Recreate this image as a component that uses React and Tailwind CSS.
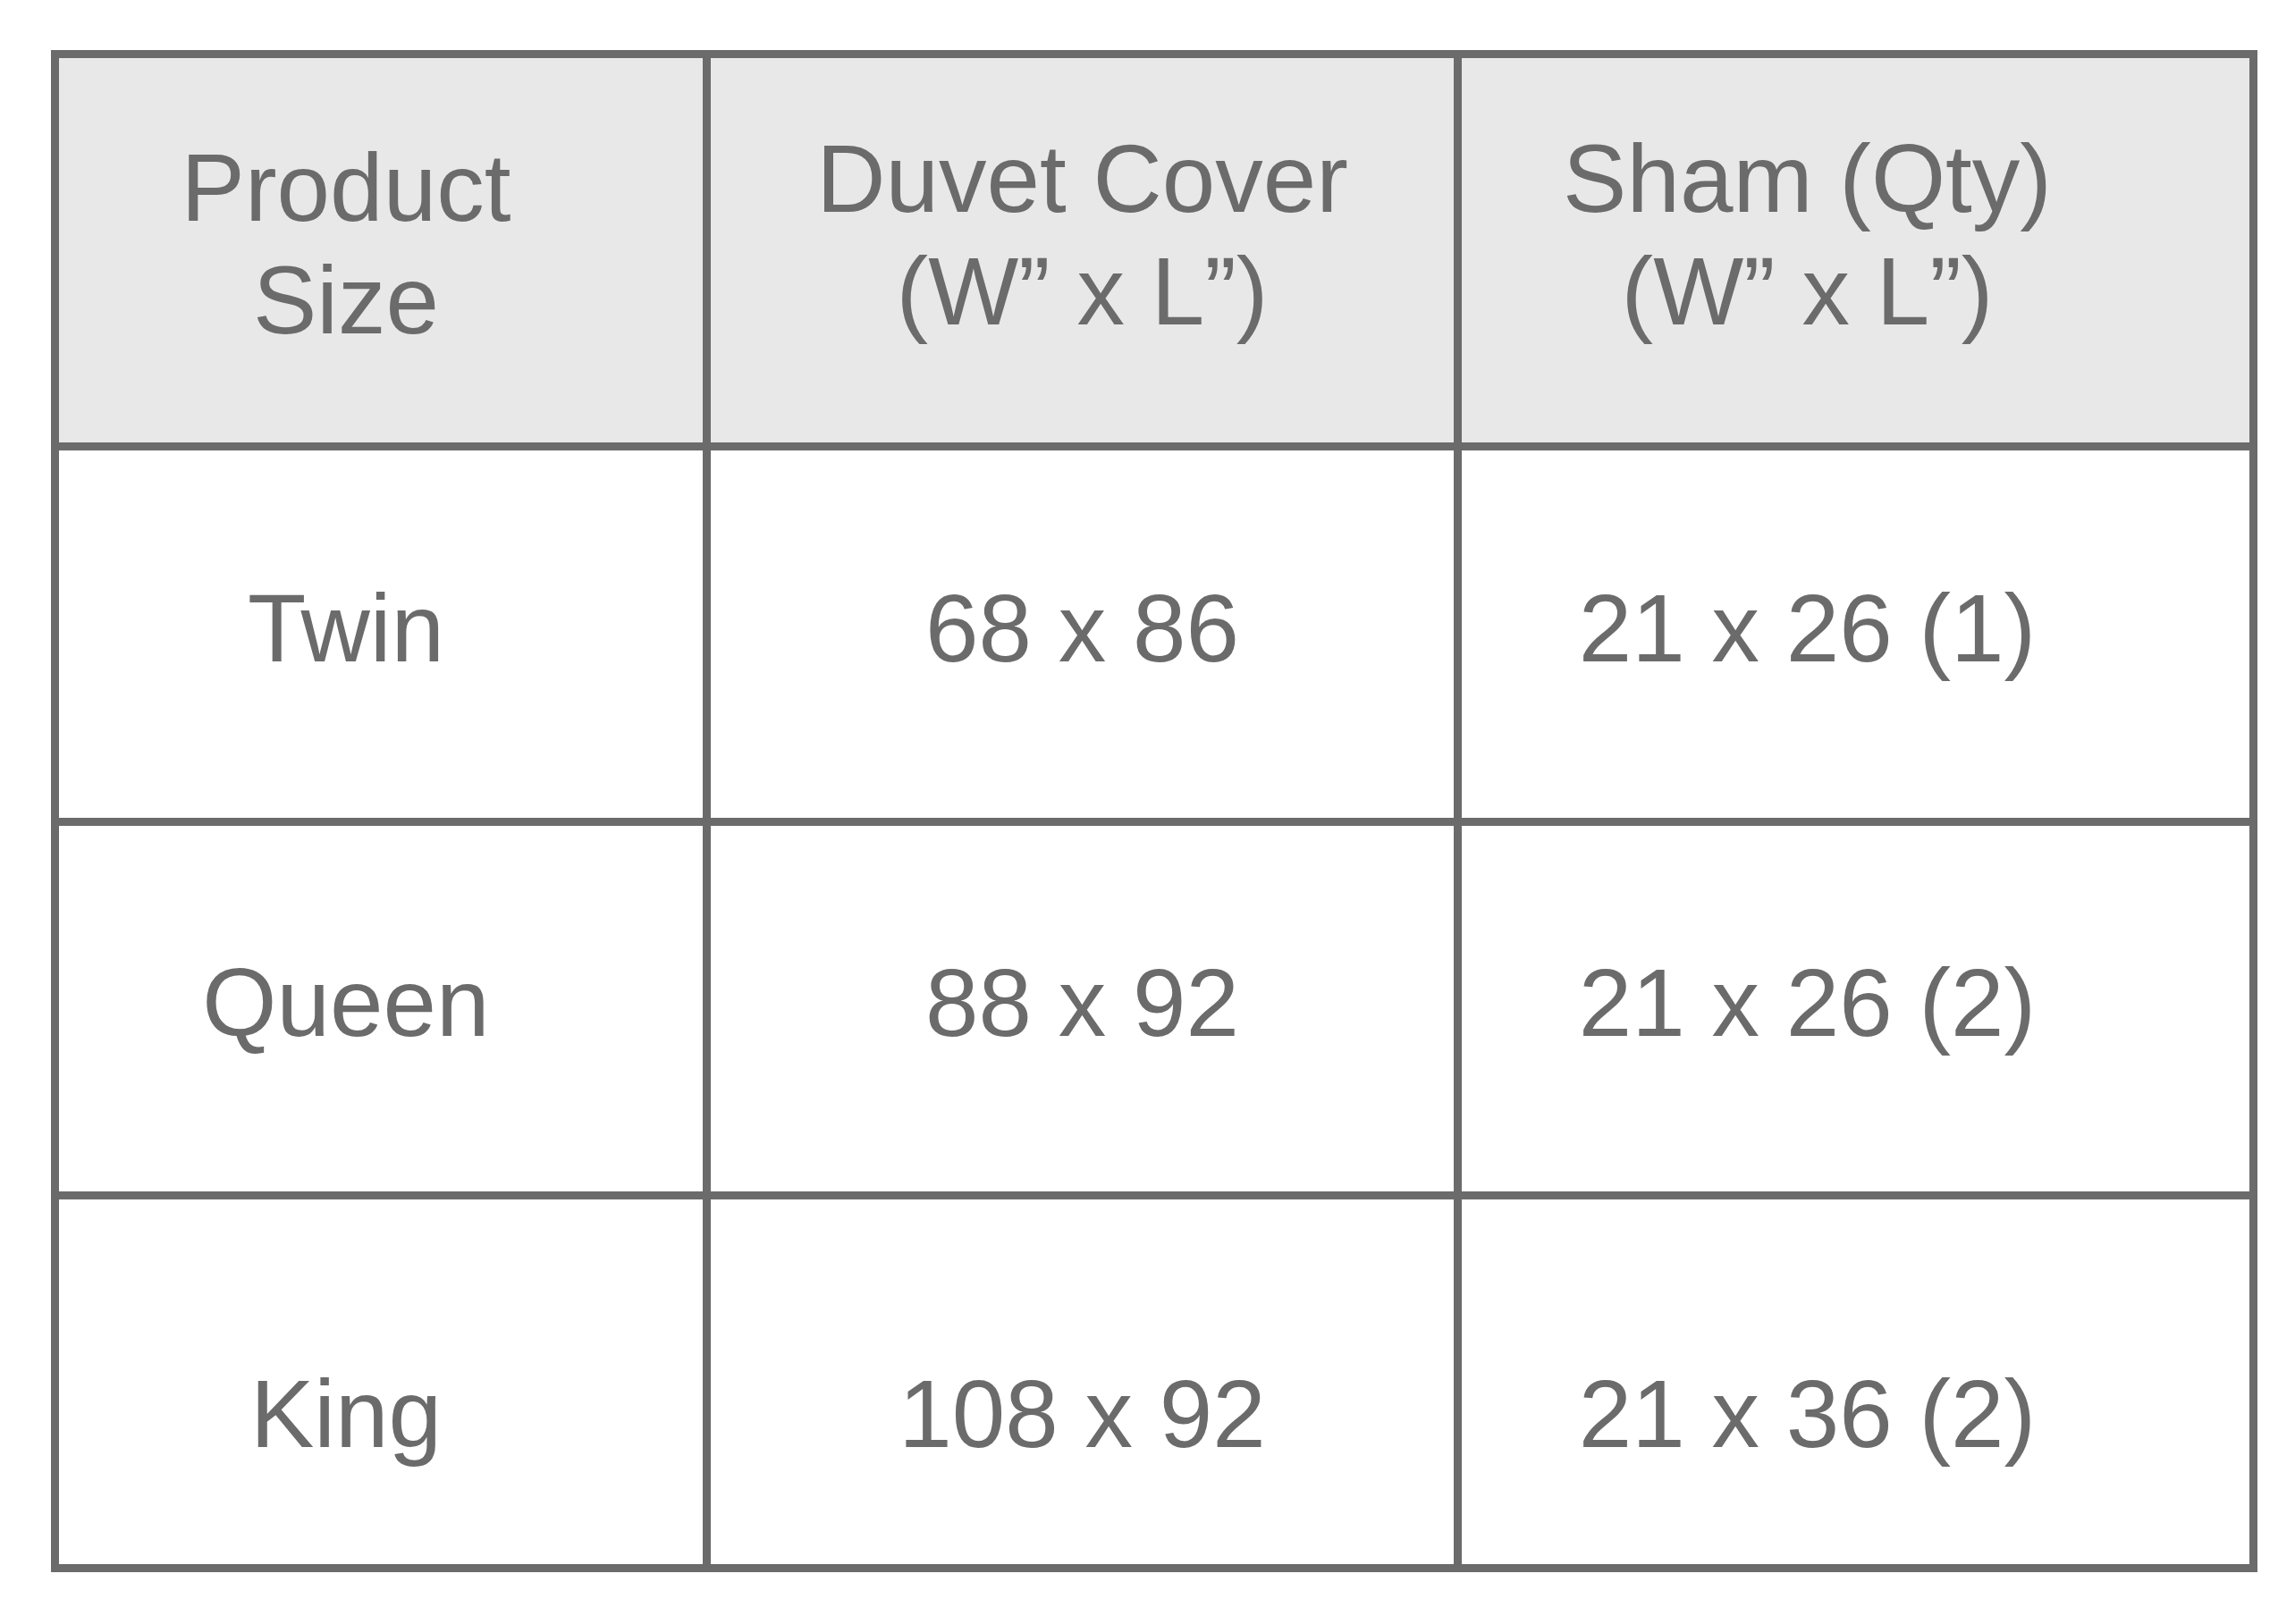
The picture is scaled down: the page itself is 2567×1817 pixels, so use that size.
const headers = [
  { lines: ['Product', 'Size'], pad: 'pr-[78px] pb-[14px]' },
  { lines: ['Duvet Cover', '(W” x L”)'], pad: 'pb-[34px]' },
  { lines: ['Sham (Qty)', '(W” x L”)'], pad: 'pr-[108px] pb-[34px]' },
];

const rows = [
  { cells: ['Twin', '68 x 86', '21 x 26 (1)'], pad: 'pb-[12px]' },
  { cells: ['Queen', '88 x 92', '21 x 26 (2)'], pad: 'pb-[12px]' },
  { cells: ['King', '108 x 92', '21 x 36 (2)'], pad: 'pt-[72px]' },
];

// horizontal offsets per column (col 1 and 3 text sits left of center)
const colPad = ['pr-[78px]', '', 'pr-[108px]'];

const App = () => {
  return (
    <div className="min-h-[1817px] w-full bg-white pt-[56px] pl-[57px] font-['Liberation_Sans',Arial,sans-serif] text-[#6b6b6b]">
      <div className="grid w-fit grid-cols-[720px_831px_881px] grid-rows-[430px_411px_409px_408px] gap-[9px] bg-[#6b6b6b] p-[9px]">
        {/* Header */}
        {headers.map((h, i) => (
          <div
            key={i}
            className={`flex flex-col items-center justify-center bg-[#e8e8e8] text-[107px] leading-[126px] ${h.pad}`}
          >
            {h.lines.map((l) => (
              <span key={l} className="whitespace-nowrap">{l}</span>
            ))}
          </div>
        ))}

        {/* Body */}
        {rows.map((r) =>
          r.cells.map((c, i) => (
            <div
              key={r.cells[0] + i}
              className={`flex items-center justify-center bg-white text-[107px] leading-none ${r.pad} ${colPad[i]}`}
            >
              <span className="whitespace-nowrap">{c}</span>
            </div>
          ))
        )}
      </div>
    </div>
  );
};

export default App;
